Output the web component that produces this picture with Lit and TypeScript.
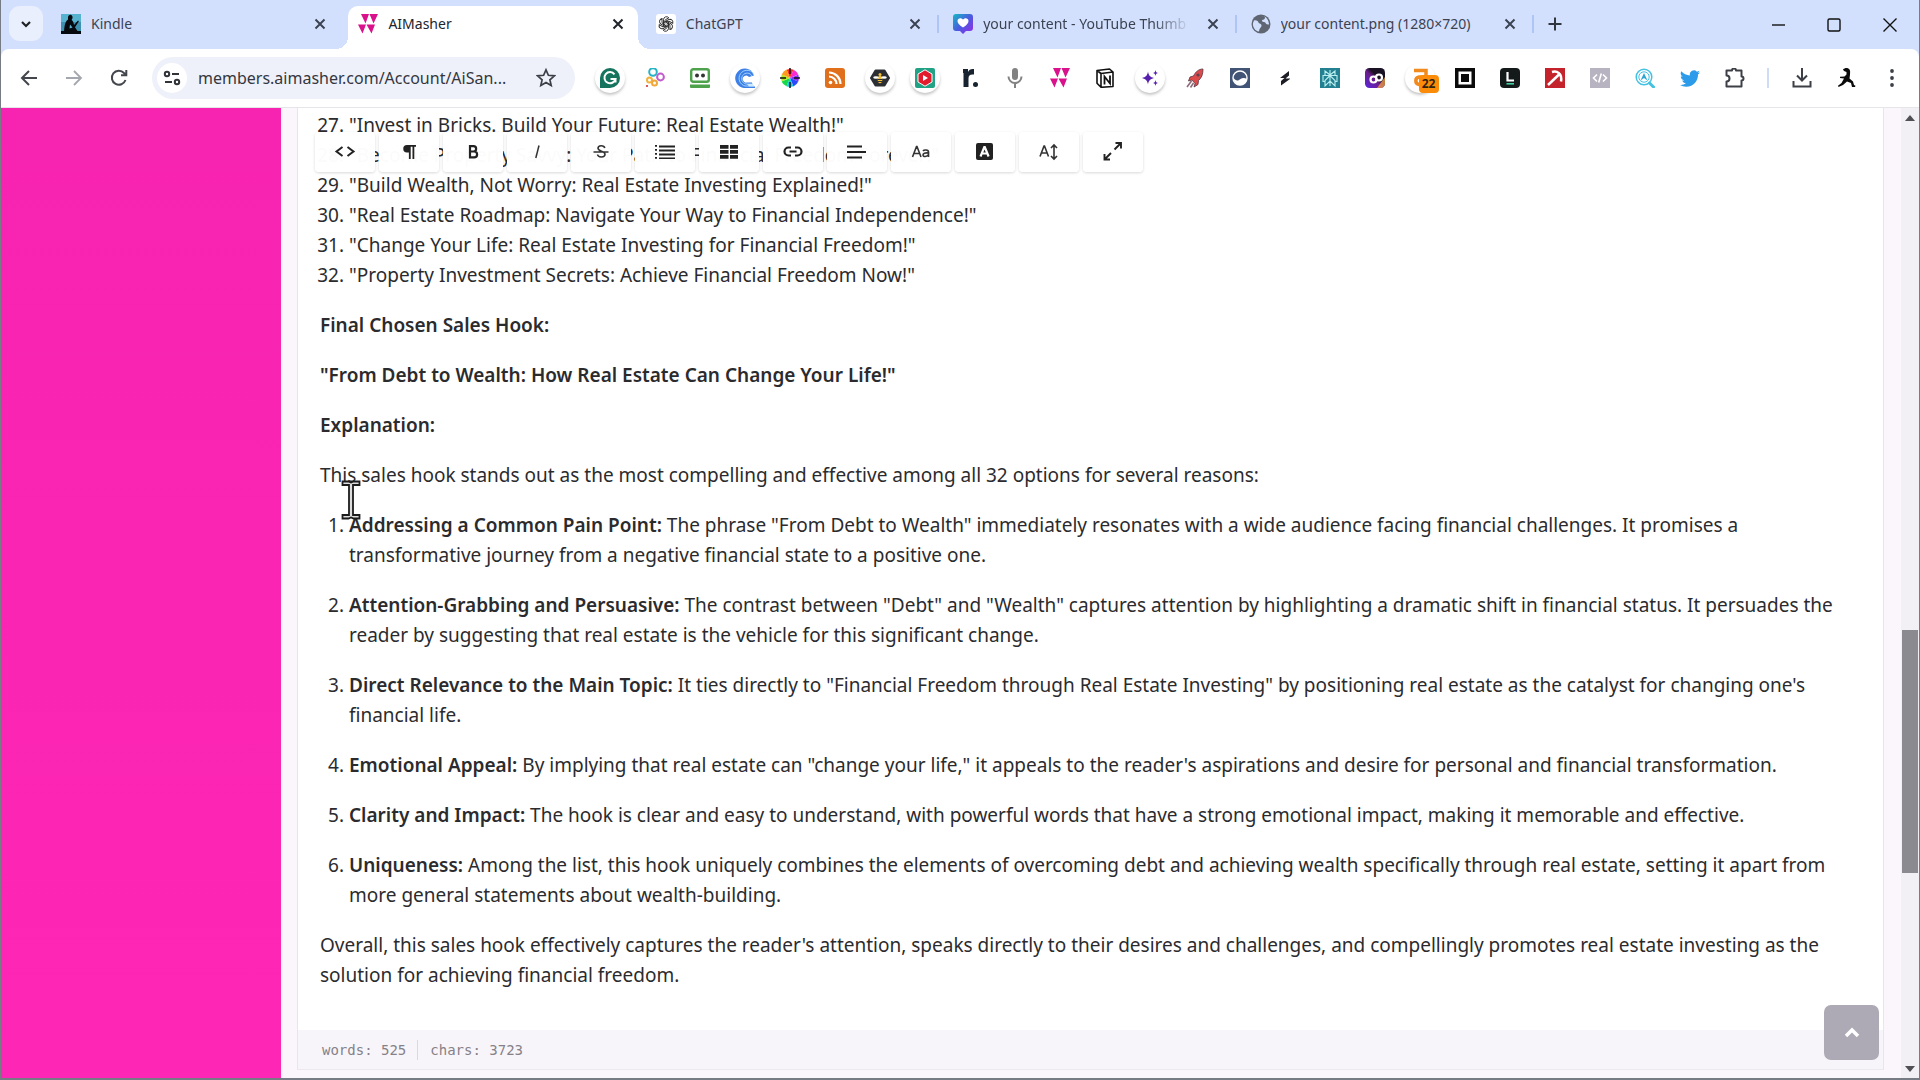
import { LitElement, html, svg, css, nothing, TemplateResult } from "lit";
import { customElement } from "lit/decorators.js";

type Art = TemplateResult;

const icon = (art: Art, size = 20, box = 20) =>
  html`<svg width=${size} height=${size} viewBox="0 0 ${box} ${box}" fill="none" aria-hidden="true">${art}</svg>`;

const masher = svg`<path fill="#d9128c" d="M3 0h8L7.500 9.500zM11.500 0H20l-4.500 9.500zM0 10.500h8L4.500 19.500zM8.500 10.500H17L13.500 19.500z"/>`;

const globe = svg`<circle cx="10" cy="10" r="9.500" fill="#5f6672"/><path fill="#d3e0fd" d="M3 6.500c2-.5 4 .5 4.500 2 .5 1.500 3 1 3 3s-2 2-2.500 6C4 17 1.500 13 2 9zM10 2c2 0 3 .5 4 1.200 0 1.800-1 2.800-3 2.800 0 2 1 2 3 2.200 1 .8 1 2.800 4 2.300C18 6 15 1.500 10 2z"/>`;

interface Tab { title: string; art: Art; active?: boolean; sep?: boolean; fade?: boolean; }

const tabs: Tab[] = [
  {
    title: "Kindle",
    art: svg`<path fill="#55b3cf" d="M0 0h20v20H0z"/><path fill="#2a6f92" d="M0 8h20v12H0z" opacity=".5"/><path fill="#06090e" d="M7 3C8-.5 12 .5 11.500 4c-.2 1-.8 1.300-.8 2 1.500 1 2 3 2.300 5l4-4.500.9.700-3.900 6 2.500 3.800H20v3H0v-3h3C3.500 13 3.500 8 7 5.500z"/><path fill="#55b3cf" d="M9 10.500l2.500 3-3 1z"/>`,
  },
  { title: "AIMasher", art: masher, active: true },
  {
    title: "ChatGPT",
    sep: true,
    art: svg`<rect width="20" height="20" rx="3" fill="#fff"/><g stroke="#222" stroke-width=".9">${[0, 60, 120, 180, 240, 300].map(
      (a) => svg`<path transform="rotate(${a} 10 10)" d="M7.500 11.400V5.700a3 3 0 0 1 5.300-1.900l-3.300 1.900a1.200 1.200 0 0 0-.6 1v3"/>`
    )}</g>`,
  },
  {
    title: "your content - YouTube Thumb",
    sep: true,
    fade: true,
    art: svg`<defs><linearGradient id="heart" x1="0" y1="0" x2="1" y2="1"><stop offset="0" stop-color="#12b9c4"/><stop offset=".5" stop-color="#4a5be0"/><stop offset="1" stop-color="#9a2be8"/></linearGradient></defs><path fill="url(#heart)" d="M3 0h14a3 3 0 0 1 3 3v11a3 3 0 0 1-3 3h-4l-3 3-3-3H3a3 3 0 0 1-3-3V3a3 3 0 0 1 3-3z"/><path fill="#fff" d="M10 13.500C6 11 4.500 9 4.500 7c0-3 4-3.800 5.500-1.200C11.500 3.200 15.500 4 15.500 7c0 2-1.500 4-5.500 6.500z"/>`,
  },
  { title: "your content.png (1280×720)", sep: true, art: globe },
];

interface Extension { name: string; art: Art; chip?: boolean; badge?: string; }

const extensions: Extension[] = [
  { name: "Grammarly", chip: true, art: svg`<path fill="#15735e" d="M10 0a10 10 0 1 1 0 20H0V10A10 10 0 0 1 10 0z"/><path stroke="#fff" stroke-width="2" d="M14.500 6.300A5.600 5.600 0 1 0 15.500 11H10.500M15.500 10.500v4"/>` },
  { name: "Circles", art: svg`<g stroke-width="2"><circle cx="8" cy="4" r="3.800" stroke="#27b3c4"/><circle cx="15.500" cy="9" r="3.400" stroke="#c45ad0"/><circle cx="4.500" cy="12" r="2.500" stroke="#f2b33d"/><circle cx="9.500" cy="15" r="2.500" stroke="#f0a83a"/></g><path fill="#e4574f" d="M1 17h2v2H1z"/>` },
  { name: "RoboForm", art: svg`<rect x="1.200" y="1.200" width="17.600" height="12.600" rx="2" stroke="#4fa24c" stroke-width="2.400" fill="#fff"/><circle cx="7" cy="7.500" r="2" fill="#333"/><circle cx="13" cy="7.500" r="2" fill="#333"/><path fill="#4fa24c" d="M0 16.500h20V19a1 1 0 0 1-1 1H1a1 1 0 0 1-1-1z"/>` },
  { name: "Swirl", chip: true, art: svg`<path fill="#3c7fe6" d="M16 2.500A9.800 9.800 0 1 0 9 20h11v-1.500h-6l-2-2.500h5v-1.500h-5A3.500 3.500 0 1 1 14 9l5-1.500z"/><g stroke="#9fd2fb"><path d="M18.500 5.500A8 8 0 1 0 10 18h9M17 8a5.500 5.500 0 1 0-6 8h7"/></g>` },
  {
    name: "Color wheel",
    art: svg`${["#ff2b2b", "#ff2bd0", "#8b2bff", "#2b48ff", "#18c8e8", "#16d84a", "#b6e820", "#ff9a1c"].map(
      (c, i) => svg`<path fill=${c} transform="rotate(${i * 45 - 22} 10 10)" d="M10 10V1a9 9 0 0 1 6.400 2.600z"/>`
    )}<path stroke="#111" stroke-width="1.500" d="M10 0v6M10 14v6M0 10h6M14 10h6"/>`,
  },
  { name: "RSS", art: svg`<rect width="20" height="20" rx="3" fill="#e0701c"/><circle cx="5.500" cy="14.500" r="1.800" fill="#fff"/><path stroke="#fff" stroke-width="2.200" d="M4 8.500a7.500 7.500 0 0 1 7.500 7.500M4 4.500A11.500 11.500 0 0 1 15.500 16"/>` },
  { name: "Bee", chip: true, art: svg`<path fill="#2c2f33" stroke="#2c2f33" stroke-width="2" stroke-linejoin="round" d="M5.500 2.500h9L19 10l-4.500 7.500h-9L1 10z"/><ellipse cx="10" cy="11.500" rx="2.300" ry="3.800" fill="#f3bf35"/><ellipse cx="6" cy="9.500" rx="2.800" ry="1.200" fill="#fff"/><ellipse cx="14" cy="9.500" rx="2.800" ry="1.200" fill="#fff"/><path stroke="#2c2f33" d="M7.500 11.500h5M8 13.500h4"/><circle cx="10" cy="6.500" r="1.500" fill="#f3bf35"/>` },
  { name: "Video", chip: true, art: svg`<rect width="20" height="20" rx="2" fill="#21a285"/><path fill="#e21b2d" stroke="#fff" d="M10 1.800 17 6v8l-7 4.200L3 14V6z"/><path fill="#fff" d="M8 7l5 3-5 3z"/>` },
  { name: "Rytr", art: svg`<path fill="#172430" d="M3 1h5v3c1-2.500 3-3.500 6-3v5.500c-4-.5-5.500 1-5.500 4V19H3.500V5H3z"/><circle cx="15.500" cy="16.500" r="2.500" fill="#172430"/>` },
  { name: "Microphone", art: svg`<rect x="7" y="0" width="6" height="12" rx="3" fill="#828282"/><path stroke="#828282" stroke-width="2" d="M3.500 8.500a6.500 6.500 0 0 0 13 0M10 15v5"/>` },
  { name: "AIMasher", art: masher },
  { name: "Notion", art: svg`<path fill="#fff" stroke="#111" stroke-width="1.600" stroke-linejoin="round" d="M2 2.500 14.500 1 18 4v14.500l-12 .8-4-4zM2 2.500l4 3 12-1.500M6 5.500v13.800"/><path stroke="#111" stroke-width="1.800" d="M9.500 16.500v-8L15 15.500v-8"/>` },
  { name: "Sparkles", chip: true, art: svg`<path fill="#561fae" d="M8 3.500c.7 4 2 5.500 6 6.500-4 1-5.300 2.500-6 6.500-.7-4-2-5.500-6-6.500 4-1 5.300-2.500 6-6.500zM15.500 2c.3 2 1 2.700 2.700 3-1.700.3-2.400 1-2.700 3-.3-2-1-2.700-2.700-3 1.700-.3 2.400-1 2.700-3zM15.500 12c.3 2 1 2.700 2.700 3-1.700.3-2.400 1-2.700 3-.3-2-1-2.700-2.700-3 1.700-.3 2.400-1 2.700-3z"/>` },
  { name: "Rocket", art: svg`<path fill="#dc4a4a" stroke="#593541" stroke-width=".8" d="M18 1c-4.500 0-7.500 3-9.500 7l-3.500 1-1.500 4 3.500-1 3 3.500-1 3.500 4-2.500.5-4c3-2.500 4.500-6 4.500-11.500z"/><circle cx="13" cy="7" r="1.600" fill="#5d4351"/><path stroke="#8e6b78" stroke-width="1.600" d="M6.500 13l-4.500 6M8.500 15l-3 4.500"/>` },
  { name: "Orbit", art: svg`<path fill="#415475" d="M0 0h20v20H0z"/><circle cx="10" cy="10" r="7" fill="#415475" stroke="#fff" stroke-width="1.400"/><path fill="#fff" d="M3.500 9.500c2 4 5 3.500 7 1.500 2-1.500 4-1.500 6.500 0-.5 3.500-3.500 6-7 6s-6.500-3-6.500-7.500z"/>` },
  { name: "Slashes", art: svg`<path fill="#1d1d25" d="M5 10 14 3v4.500l-3.500 3H15V11l-9 6.500V13l3.500-3z"/>` },
  { name: "Perplexity", art: svg`<path fill="#238090" d="M0 0h20v20H0z"/><path stroke="#b9eef0" stroke-width="1.100" d="M10 2v16M10 7 5 3v4.500h10V3zM10 7.500l-5 5V18l5-5 5 5v-5.500zM5 13.500H3v-6h14v6h-2"/>` },
  { name: "Infinity", art: svg`<defs><linearGradient id="inf" x1="0" y1="1" x2="1" y2="0"><stop offset="0" stop-color="#5a28e0"/><stop offset=".45" stop-color="#6b1d8c"/><stop offset=".6" stop-color="#1a1224"/><stop offset="1" stop-color="#1a1224"/></linearGradient></defs><rect width="20" height="20" rx="4.500" fill="url(#inf)"/><path fill="#ec9a4a" d="M20 9v6.500a4.500 4.500 0 0 1-4.500 4.500H12z" opacity=".8"/><circle cx="8.500" cy="11.500" r="3" stroke="#fff" stroke-width="2.200"/><circle cx="14" cy="9.500" r="3" stroke="#fff" stroke-width="2.200"/>` },
  { name: "Amazon tool", badge: "22", chip: true, art: svg`<path stroke="#f08a1d" stroke-width="3.500" d="M4 2.500h12V12M15 9H9a3.800 3.800 0 0 0 0 7.500h3"/>` },
  { name: "Square", art: svg`<path fill="#0b0b0b" d="M0 0h20v20H0z"/><path fill="#fff" d="M3.500 3.500h13v13h-13z"/><path fill="#0b0b0b" d="M6 6h8v8H6z"/>` },
  { name: "L", art: svg`<rect width="20" height="20" rx="4" fill="#141a1a"/><path stroke="#fff" stroke-width="2.200" d="M7.500 4v8.500H14"/><path stroke="#3fd0a0" stroke-width="1.600" d="M6.500 15.800H14"/>` },
  { name: "Pickaxe", art: svg`<path fill="#c4232c" d="M0 0h20v20H0z"/><path stroke="#fff" stroke-width="2.500" d="M3 17 14 6.500M7 4c5-1.500 10.500 1.500 9 9.500"/>` },
  { name: "Code", art: svg`<path fill="#b7b3c1" d="M0 0h20v20H0z"/><path stroke="#fff" stroke-width="1.600" d="M7 6.500 3.500 10 7 13.500M13 6.500l3.500 3.500-3.500 3.500M11.300 5.500l-2.600 9"/>` },
  { name: "Search", art: svg`<circle cx="9" cy="9" r="7.800" stroke="#45c1e2" stroke-width="1.500"/><circle cx="9" cy="9" r="5.200" stroke="#45c1e2"/><path fill="#2ba6d2" d="M5.500 12.500 9 5l3.500 7.500L9 10z"/><path stroke="#45c1e2" stroke-width="3" stroke-linecap="round" d="M14.500 15l4 4"/>` },
  { name: "Twitter", art: svg`<path fill="#2b9bea" d="M20 4.200c-.7.400-1.500.6-2.300.700.8-.5 1.500-1.300 1.800-2.200-.8.500-1.700.8-2.600 1a4.100 4.100 0 0 0-7 3.700C6.500 7.300 3.500 5.700 1.400 3.200a4.100 4.100 0 0 0 1.300 5.500c-.7 0-1.300-.2-1.900-.5 0 2 1.400 3.700 3.300 4.100-.6.200-1.200.2-1.900.1.500 1.600 2 2.800 3.800 2.800A8.200 8.200 0 0 1 0 16.900 11.600 11.600 0 0 0 6.300 18.700c7.500 0 12-6.400 11.700-12.200.8-.6 1.500-1.400 2-2.300z"/>` },
  { name: "Extensions", art: svg`<path stroke="#3c4046" stroke-width="2" stroke-linejoin="round" d="M1.500 2.500h5.500a2 2 0 0 1 4 0h5.500v6a2 2 0 0 1 0 4v6h-15v-5a3 3 0 0 0 0-6z"/>` },
];

const tools: { label: string; art: Art }[] = [
  { label: "Code view", art: svg`<path stroke="#222" stroke-width="2" d="M8.500 6 2.500 10.500l6 4.500M13.500 6l6 4.500-6 4.500"/>` },
  { label: "Paragraph", art: svg`<path fill="#222" d="M9 4h9v1.800h-1.700V18h-1.800V5.800h-1.800V18h-1.800v-6.500H9A3.750 3.750 0 0 1 9 4z"/>` },
  { label: "Bold", art: svg`<path stroke="#222" stroke-width="2.200" d="M8 5.200h3.500a2.600 2.600 0 0 1 0 5.300H8zM8 10.500h4.200a2.900 2.900 0 0 1 0 5.800H8z"/>` },
  { label: "Italic", art: svg`<path stroke="#333" stroke-width="1.500" d="M13 4.500 9.800 17"/>` },
  { label: "Strikethrough", art: svg`<path stroke="#333" stroke-width="1.600" d="M14.800 7C14 4 8 4 8 7.300c0 3.500 7 2.300 7 5.900 0 3.600-7 3.600-7.500.3M3.500 11h15"/>` },
  { label: "List", art: svg`<path fill="#222" d="M1 4h2v1.800H1zM1 8h2v1.800H1zM1 12h2v1.800H1zM1 16h2v1.800H1zM5 4.500h16v2H5zM5 8.500h16v2H5zM5 12.500h16v2H5zM5 16.500h16v1.500H5z"/>` },
  { label: "Table", art: svg`<path fill="#222" d="M2 4h8.500v3.800H2zM12 4h8v3.800h-8zM2 9h8.500v3.800H2zM12 9h8v3.800h-8zM2 14h8.500v3.800H2zM12 14h8v3.800h-8z"/>` },
  { label: "Link", art: svg`<path stroke="#222" stroke-width="2.200" d="M9 14.500H6.500a4 4 0 0 1 0-8H9M13 6.500h2.500a4 4 0 0 1 0 8H13M7.500 10.500h7"/>` },
  { label: "Align", art: svg`<path fill="#222" d="M1 4.500h15v2H1zM1 10h19v2H1zM1 15.500h15v2H1z"/>` },
  { label: "Case", art: svg`<path stroke="#333" stroke-width="1.600" d="M2.500 16 6.500 5.500h.5L11 16M4 12.500h5.500M13 10c1-1.500 5.500-1.500 5.500 1v5M18.500 12c-3.500-.5-5.500.5-5.500 2 0 2.200 4.200 2 5.500-.5"/>` },
  { label: "Text colour", art: svg`<rect x="2" y="2" width="17" height="17" rx="2" fill="#222"/><path stroke="#fff" stroke-width="2.200" d="M6.500 15.500 10.300 6h.5l3.800 9.500M8 12.500h5"/>` },
  { label: "Line height", art: svg`<path stroke="#333" stroke-width="1.600" d="M2 15.500 6 5h.5l4 10.500M3.500 12h6M16 4v14M13 7l3-3 3 3M13 15l3 3 3-3"/>` },
  { label: "Expand", art: svg`<path stroke="#222" stroke-width="1.900" d="M12.500 8.500 19 2M13.500 2H19v5.500M9 12l-6.500 6.500M2.500 13v5.500H8"/>` },
];

const hooks = [
  "\"Invest in Bricks. Build Your Future: Real Estate Wealth!\"",
  "\"Become Property Savvy: Your Path to Financial Freedom Forever!\"",
  "\"Build Wealth, Not Worry: Real Estate Investing Explained!\"",
  "\"Real Estate Roadmap: Navigate Your Way to Financial Independence!\"",
  "\"Change Your Life: Real Estate Investing for Financial Freedom!\"",
  "\"Property Investment Secrets: Achieve Financial Freedom Now!\"",
];

const reasons: [string, string][] = [
  ["Addressing a Common Pain Point:", "The phrase \"From Debt to Wealth\" immediately resonates with a wide audience facing financial challenges. It promises a transformative journey from a negative financial state to a positive one."],
  ["Attention-Grabbing and Persuasive:", "The contrast between \"Debt\" and \"Wealth\" captures attention by highlighting a dramatic shift in financial status. It persuades the reader by suggesting that real estate is the vehicle for this significant change."],
  ["Direct Relevance to the Main Topic:", "It ties directly to \"Financial Freedom through Real Estate Investing\" by positioning real estate as the catalyst for changing one's financial life."],
  ["Emotional Appeal:", "By implying that real estate can \"change your life,\" it appeals to the reader's aspirations and desire for personal and financial transformation."],
  ["Clarity and Impact:", "The hook is clear and easy to understand, with powerful words that have a strong emotional impact, making it memorable and effective."],
  ["Uniqueness:", "Among the list, this hook uniquely combines the elements of overcoming debt and achieving wealth specifically through real estate, setting it apart from more general statements about wealth-building."],
];

@customElement("browser-tabs")
class BrowserTabs extends LitElement {
  static styles = css`
    :host { display: flex; height: 49px; align-items: flex-end; background: #d3e0fd; font: 14px/20px "Noto Sans", sans-serif; color: #3b4252; }
    button { border: 0; padding: 0; background: none; display: grid; place-items: center; color: inherit; }
    svg { display: block; flex: none; }
    .search { width: 34px; height: 35px; margin: 0 8px 8px; border-radius: 11px; background: #e9effd; }
    .tabs { display: flex; flex: 0 1 1487px; min-width: 0; }
    .tab { position: relative; flex: 1 1 0; min-width: 0; height: 43px; display: flex; align-items: center; gap: 10px; padding: 0 20px 7px 10px; box-sizing: border-box; }
    .title { flex: 1; overflow: hidden; white-space: nowrap; }
    .fade { -webkit-mask-image: linear-gradient(90deg, #000 80%, transparent 98%); }
    .close { width: 16px; height: 16px; }
    .active { color: #20242c; }
    .active::before { content: ""; position: absolute; z-index: 0; inset: 0 8px 0 0; background: #fff; border-radius: 10px 10px 0 0; }
    .active::after { content: ""; position: absolute; inset: auto -4px 0 -12px; height: 12px; background: radial-gradient(circle at 0 0, transparent 12px, #fff 12px) left / 12px 12px no-repeat, radial-gradient(circle at 100% 0, transparent 12px, #fff 12px) right / 12px 12px no-repeat; }
    .active > * { position: relative; z-index: 1; }
    .sep::after { content: ""; position: absolute; right: 4px; top: 9px; width: 2px; height: 18px; background: #aec5f5; }
    .new { width: 34px; height: 34px; margin: 0 0 8px; }
    .window { display: flex; margin-left: auto; margin-right: 1px; height: 49px; }
    .window button { width: 56px; }
  `;

  render() {
    return html`
      <button class="search" aria-label="Search tabs">${icon(svg`<path stroke="#202124" stroke-width="2.200" d="M6 8l4 4 4-4"/>`)}</button>
      <div class="tabs" role="tablist">
        ${tabs.map((t) => html`
          <div class="tab ${t.active ? "active" : ""} ${t.sep ? "sep" : ""}" role="tab" aria-selected=${t.active ? "true" : "false"}>
            ${icon(t.art)}<span class="title ${t.fade ? "fade" : ""}">${t.title}</span>
            <button class="close" aria-label="Close tab">${icon(svg`<path stroke="currentColor" stroke-width="2" d="M3.500 3.500l9 9M12.500 3.500l-9 9"/>`, 16, 16)}</button>
          </div>`)}
      </div>
      <button class="new" aria-label="New tab">${icon(svg`<path stroke="#30363f" stroke-width="2" d="M10 3.500v13M3.500 10h13"/>`)}</button>
      <div class="window">
        <button aria-label="Minimize">${icon(svg`<path stroke="#111" stroke-width="1.400" d="M4 10h13"/>`)}</button>
        <button aria-label="Maximize">${icon(svg`<rect x="4" y="4" width="12" height="12" rx="1.500" stroke="#111" stroke-width="1.400"/>`)}</button>
        <button aria-label="Close">${icon(svg`<path stroke="#111" stroke-width="1.400" d="M3.500 3.500l13 13M16.500 3.500l-13 13"/>`)}</button>
      </div>`;
  }
}

@customElement("browser-toolbar")
class BrowserToolbar extends LitElement {
  static styles = css`
    :host { display: block; background: #d3e0fd; }
    .bar { display: flex; align-items: center; height: 58px; padding: 0 5px; background: #fff; border-bottom: 1px solid #e6e6ea; border-radius: 8px 8px 0 0; }
    button { border: 0; padding: 0; background: none; display: grid; place-items: center; width: 45px; height: 42px; flex: none; }
    svg { display: block; }
    .address { flex: 0 1 424px; min-width: 0; box-sizing: border-box; height: 42px; display: flex; align-items: center; margin: 0 12px 0 11px; border-radius: 21px; background: #eff1fa; padding: 0 6px 0 5px; }
    .address .site { width: 30px; height: 30px; border-radius: 50%; background: #fff; }
    .address input { flex: 1; min-width: 0; height: 32px; margin-left: 11px; padding: 0; border: 0; outline: 0; background: none; color: #33373f; font: 16px/24px "Noto Sans", sans-serif; text-overflow: ellipsis; }
    .address .star { width: 46px; }
    .extensions { display: flex; flex: none; }
    .chip { width: 30px; height: 30px; border-radius: 50%; display: grid; place-items: center; position: relative; }
    .lift { box-shadow: 0 2px 3px #0000003a; }
    .badge { position: absolute; left: 14px; top: 12px; width: 20px; height: 18px; border-radius: 4px; background: #fb8c0a; color: #30220e; font: 700 12px/18px "Open Sans", sans-serif; text-align: center; }
    .rule { width: 2px; height: 20px; background: #cfdcf6; margin: 0 10px; }
  `;

  render() {
    return html`<div class="bar">
      <button aria-label="Back">${icon(svg`<path stroke="#43474d" stroke-width="2" d="M18 10H3.500M10 3l-7 7 7 7"/>`)}</button>
      <button aria-label="Forward">${icon(svg`<path stroke="#a4a7ad" stroke-width="1.800" d="M2 10h14.500M10 3l7 7-7 7"/>`)}</button>
      <button aria-label="Reload">${icon(svg`<path stroke="#43474d" stroke-width="2" d="M16.500 12A7 7 0 1 1 15 5l2 2M17.300 2v5.300H12"/>`)}</button>
      <div class="address">
        <button class="site" aria-label="Site information">${icon(svg`<g stroke="#303338" stroke-width="2"><circle cx="5" cy="6" r="2.200"/><path d="M10 6h7M3 14h7"/><circle cx="15" cy="14" r="2.200"/></g>`)}</button>
        <input aria-label="Address" value="members.aimasher.com/Account/AiSan..." />
        <button class="star" aria-label="Bookmark">${icon(svg`<path stroke="#3c4046" stroke-width="1.700" d="M10 1.800l2.400 5.500 6 .5-4.500 4 1.300 5.800L10 14.500l-5.200 3.100 1.300-5.800-4.500-4 6-.5z"/>`)}</button>
      </div>
      <div class="extensions">
        ${extensions.map((e) => html`<button aria-label=${e.name}><span class="chip ${e.chip ? "lift" : ""}">${icon(e.art)}${e.badge ? html`<span class="badge">${e.badge}</span>` : nothing}</span></button>`)}
      </div>
      <span class="rule"></span>
      <button aria-label="Downloads">${icon(svg`<path stroke="#3c4046" stroke-width="2" d="M10 0v12M5 7.500l5 5 5-5M1.500 13v5.500h17V13"/>`)}</button>
      <button aria-label="Profile">${icon(svg`<path fill="#0b0b0b" d="M6 1.500C8-.5 11-.5 12.500 1.500c1 1.500.5 3 .5 5l-.5 4 3.500 3 1 3.500 1.500.8-.5 1.200h-3l-1-4-4-1.500L6 17l-4.500 2-.5-1.200L4.500 15 7 10.500l-4-.5V8.800l4.500-.3 2-2L9.500 4 7 3z"/>`)}</button>
      <button aria-label="Menu">${icon(svg`<g fill="#3c4046"><circle cx="10" cy="3" r="1.900"/><circle cx="10" cy="10" r="1.900"/><circle cx="10" cy="17" r="1.900"/></g>`)}</button>
    </div>`;
  }
}

@customElement("text-editor")
class TextEditor extends LitElement {
  static styles = css`
    :host { position: relative; display: flex; flex-direction: column; min-width: 0; box-sizing: border-box; border: 1px solid #e9e5ed; border-width: 0 1px; background: #fff; }
    .copy { flex: 1; min-height: 0; overflow: hidden; padding: 2px 22px 0; font: 19px/30px "Noto Sans", "Trebuchet MS", sans-serif; color: #2b2b2e; }
    strong { font-weight: 600; }
    p { margin: 0 0 20px; }
    ol { margin: 0 0 20px; padding-left: 29px; }
    .reasons li { margin-bottom: 20px; }
    .tools { position: absolute; left: 17px; top: 24px; display: flex; gap: 4px; }
    .tools button { width: 60px; height: 40px; border: 0; padding: 0; display: grid; place-items: center; background: #fffffffa; border-radius: 4px; box-shadow: 0 1px 3px #00000028; }
    svg { display: block; }
    .status { display: flex; align-items: center; height: 39px; border-bottom: 1px solid #ece8ef; background: #f8f5fa; padding-left: 24px; color: #858188; font: 14px/20px "DejaVu Sans Mono", monospace; }
    .status span + span { margin-left: 11px; padding-left: 12px; border-left: 1px solid #dcd8e0; }
  `;

  render() {
    return html`
      <div class="copy">
        <ol start="27">${hooks.map((h) => html`<li>${h}</li>`)}</ol>
        <p><strong>Final Chosen Sales Hook:</strong></p>
        <p><strong>"From Debt to Wealth: How Real Estate Can Change Your Life!"</strong></p>
        <p><strong>Explanation:</strong></p>
        <p>This sales hook stands out as the most compelling and effective among all 32 options for several reasons:</p>
        <ol class="reasons">${reasons.map(([lead, rest]) => html`<li><strong>${lead}</strong> ${rest}</li>`)}</ol>
        <p>Overall, this sales hook effectively captures the reader's attention, speaks directly to their desires and challenges, and compellingly promotes real estate investing as the solution for achieving financial freedom.</p>
      </div>
      <div class="tools" role="toolbar" aria-label="Formatting">
        ${tools.map((t) => html`<button aria-label=${t.label}>${icon(t.art, 22, 22)}</button>`)}
      </div>
      <div class="status"><span>words: 525</span><span>chars: 3723</span></div>`;
  }
}

@customElement("app-root")
class AppRoot extends LitElement {
  static styles = css`
    :host { display: flex; flex-direction: column; height: 100vh; box-sizing: border-box; border: 1px solid #777b84; border-width: 0 1px 2px; margin: 0; overflow: hidden; }
    .page { position: relative; flex: 1; min-height: 0; display: flex; background: #faf6fc; }
    .side { width: 280px; flex: none; background: linear-gradient(#f724b1, #fe26b5); }
    text-editor { flex: 1; margin: 0 17px 8px 16px; }
    .scroll { width: 18px; flex: none; display: flex; flex-direction: column; align-items: center; justify-content: space-between; background: #f2f0f5; padding: 6px 0 4px; box-sizing: border-box; }
    .scroll svg { display: block; }
    .track { flex: 1; width: 100%; display: flex; flex-direction: column; }
    .before { flex: 502; }
    .thumb { flex: 241; background: #8b8a90; margin: 0 1px; }
    .after { flex: 190; }
    .top { position: absolute; right: 40px; bottom: 18px; width: 55px; height: 55px; border: 0; padding: 0; border-radius: 7px; display: grid; place-items: center; background: #aeaab5; }
    .caret { position: absolute; left: 340px; top: 372px; }
  `;

  render() {
    return html`
      <browser-tabs></browser-tabs>
      <browser-toolbar></browser-toolbar>
      <main class="page">
        <aside class="side"></aside>
        <text-editor></text-editor>
        <div class="scroll">
          ${icon(svg`<path fill="#505054" d="M5 1l5 6H0z"/>`, 10, 10)}
          <div class="track"><span class="before"></span><span class="thumb"></span><span class="after"></span></div>
          ${icon(svg`<path fill="#505054" d="M0 2h10L5 8z"/>`, 10, 10)}
        </div>
        <button class="top" aria-label="Back to top">${icon(svg`<path stroke="#fff" stroke-width="3.500" d="M4 13l6-6 6 6"/>`)}</button>
        <svg class="caret" width="20" height="40" viewBox="0 0 20 40" aria-hidden="true"><path fill="#ddd" stroke="#1c1c1c" stroke-width="1.800" d="M1.500 1.500h6l2.500 1 2.500-1h6v3.500H12v30h6.500v3.500h-6l-2.500-1-2.500 1h-6V35H8V5H1.500z"/></svg>
      </main>`;
  }
}
